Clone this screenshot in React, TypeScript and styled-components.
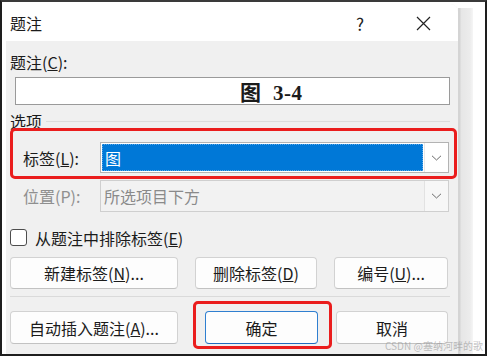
import React, { FC } from 'react'
import styled, { createGlobalStyle } from 'styled-components'

const GlobalStyle = createGlobalStyle`
  html, body {
    margin: 0;
    padding: 0;
    background: #ffffff;
  }
  * {
    box-sizing: border-box;
  }
`

const Page = styled.div`
  position: relative;
  width: 487px;
  height: 356px;
  border: 2px solid #1e1e1e;
  border-top-color: #3a3a3a;
  background: #ffffff;
  display: flex;
  overflow: hidden;
  font-family: "Noto Sans CJK SC", "Noto Sans", sans-serif;
  color: #1b1b1b;
`

const Dialog = styled.div`
  width: 452px;
  margin-top: 2px;
  margin-left: 4px;
  display: flex;
  flex-direction: column;
  border-top-right-radius: 8px;
  overflow: hidden;
  background: #f0f0f0;
`

const ShadowEdge = styled.div`
  width: 15px;
  margin-top: 6px;
  background: linear-gradient(to right, #d4d4d4 0px, #d4d4d4 2px, #e6e6e6 3px, #ececec 12px, #f6f6f6 15px);
`

const TitleBar = styled.div`
  height: 37px;
  flex: none;
  background: #ffffff;
  display: flex;
  align-items: center;
  padding: 1px 0 0 4px;
  font-size: 16px;
`

const Title = styled.span`
  flex: 1;
`

const TitleIcon = styled.span<{ $w: number }>`
  width: ${(p) => p.$w}px;
  display: flex;
  justify-content: center;
  align-items: center;
  font-size: 17px;
  color: #222;
`

const Body = styled.div`
  flex: 1;
  padding: 11px 0 0 4px;
  display: flex;
  flex-direction: column;
  font-size: 16px;
`

const Label = styled.div<{ $disabled?: boolean }>`
  line-height: 20px;
  height: 20px;
  white-space: nowrap;
  color: ${(p) => (p.$disabled ? '#8f8f8f' : '#1b1b1b')};
`

const CaptionInput = styled.div`
  margin: 5px 0 0 5px;
  width: 435px;
  height: 28px;
  background: #ffffff;
  border: 1px solid #9a9a9a;
  display: flex;
  align-items: center;
  padding-left: 224px;
  font-family: "Liberation Serif", "Noto Sans CJK SC", serif;
  font-weight: 700;
  font-size: 21px;
  letter-spacing: 0.5px;
`

const GroupHeader = styled.div`
  margin-top: 6px;
  display: flex;
  align-items: center;
  gap: 4px;
  width: 440px;
`

const GroupLine = styled.div`
  flex: 1;
  height: 1px;
  background: #dcdcdc;
`

const Highlight = styled.div`
  border: 3px solid #ea1d1d;
  border-radius: 5px;
`

const LabelHighlight = styled(Highlight)`
  margin-top: -3px;
  width: 447px;
  padding: 11px 0 3px 10px;
`

const FieldRow = styled.div<{ $indent?: number; $mt?: number }>`
  display: flex;
  align-items: center;
  padding-left: ${(p) => p.$indent ?? 0}px;
  margin-top: ${(p) => p.$mt ?? 0}px;
`

const FieldLabel = styled(Label)`
  width: 77px;
`

const Combo = styled.div<{ $disabled?: boolean; $h: number }>`
  width: 349px;
  height: ${(p) => p.$h}px;
  display: flex;
  border: 1px solid ${(p) => (p.$disabled ? '#cfcfcf' : '#b3b3b3')};
  background: ${(p) => (p.$disabled ? '#f2f2f2' : '#ffffff')};
`

const ComboField = styled.div`
  flex: 1;
  padding: 1px;
  display: flex;
`

const Selected = styled.div`
  flex: 1;
  background: #0078d7;
  color: #ffffff;
  display: flex;
  align-items: center;
  padding-left: 3px;
  outline: 1px dotted #5aa6e6;
  outline-offset: -1px;
`

const ComboText = styled.div`
  flex: 1;
  display: flex;
  align-items: center;
  padding-left: 3px;
  color: #8a8a8a;
`

const DropButton = styled.div<{ $disabled?: boolean }>`
  width: 24px;
  display: flex;
  align-items: center;
  justify-content: center;
  background: ${(p) => (p.$disabled ? '#f7f7f7' : '#ffffff')};
  border-left: 1px solid ${(p) => (p.$disabled ? '#e2e2e2' : '#e8e8e8')};
`

const CheckRow = styled.div`
  margin-top: 17px;
  display: flex;
  align-items: center;
  gap: 8px;
  height: 17px;
`

const CheckBox = styled.div`
  width: 17px;
  height: 17px;
  border: 1px solid #4d4d4d;
  border-radius: 3px;
  background: #ffffff;
`

const ButtonRow = styled.div<{ $mt: number }>`
  margin-top: ${(p) => p.$mt}px;
  display: flex;
  align-items: flex-start;
`

const Button = styled.div<{ $w: number; $h?: number; $ml?: number; $mt?: number; $default?: boolean }>`
  width: ${(p) => p.$w}px;
  height: ${(p) => p.$h ?? 32}px;
  margin-left: ${(p) => p.$ml ?? 0}px;
  margin-top: ${(p) => p.$mt ?? 0}px;
  flex: none;
  display: flex;
  align-items: center;
  justify-content: center;
  background: #fdfdfd;
  border: 1px solid ${(p) => (p.$default ? '#2f7fd0' : '#d2d2d2')};
  border-bottom-color: ${(p) => (p.$default ? '#1f6cc0' : '#c2c2c2')};
  border-radius: 4px;
  white-space: nowrap;
  font-size: 16px;
`

const Separator = styled.div`
  margin-top: 7px;
  width: 440px;
  height: 1px;
  background: #dadada;
`

const OkHighlight = styled(Highlight)`
  margin-left: 15px;
  width: 139px;
  padding: 7px 0 2px 9px;
`

const Watermark = styled.div`
  position: absolute;
  left: 383px;
  top: 336px;
  font-size: 10px;
  color: rgba(150, 150, 150, 0.6);
  white-space: nowrap;
`

const Chevron: FC = () => (
  <svg width="11" height="6" viewBox="0 0 11 6">
    <path d="M1 0.8 L5.5 5 L10 0.8" fill="none" stroke="#6a6a6a" strokeWidth="1" />
  </svg>
)

const CloseIcon: FC = () => (
  <svg width="15" height="15" viewBox="0 0 15 15">
    <path d="M1 1 L14 14 M14 1 L1 14" stroke="#222" strokeWidth="1.2" />
  </svg>
)

export default function App() {
  return (
    <>
      <GlobalStyle />
      <Page>
        <Dialog>
          <TitleBar>
            <Title>题注</Title>
            <TitleIcon $w={28}>?</TitleIcon>
            <TitleIcon $w={35} />
            <TitleIcon $w={28}>
              <CloseIcon />
            </TitleIcon>
            <TitleIcon $w={21} />
          </TitleBar>
          <Body>
            <Label>
              题注(<u>C</u>):
            </Label>
            <CaptionInput>图&nbsp;&nbsp;3-4</CaptionInput>
            <GroupHeader>
              <Label>选项</Label>
              <GroupLine />
            </GroupHeader>
            <LabelHighlight>
              <FieldRow>
                <FieldLabel>
                  标签(<u>L</u>):
                </FieldLabel>
                <Combo $h={31}>
                  <ComboField>
                    <Selected>图</Selected>
                  </ComboField>
                  <DropButton>
                    <Chevron />
                  </DropButton>
                </Combo>
              </FieldRow>
            </LabelHighlight>
            <FieldRow $indent={13} $mt={1}>
              <FieldLabel $disabled>位置(P):</FieldLabel>
              <Combo $h={32} $disabled>
                <ComboText>所选项目下方</ComboText>
                <DropButton $disabled>
                  <Chevron />
                </DropButton>
              </Combo>
            </FieldRow>
            <CheckRow>
              <CheckBox />
              <Label>
                从题注中排除标签(<u>E</u>)
              </Label>
            </CheckRow>
            <ButtonRow $mt={11}>
              <Button $w={168}>
                新建标签(<u>N</u>)...
              </Button>
              <Button $w={122} $ml={17}>
                删除标签(<u>D</u>)
              </Button>
              <Button $w={114} $ml={17}>
                编号(<u>U</u>)...
              </Button>
            </ButtonRow>
            <Separator />
            <ButtonRow $mt={4}>
              <Button $w={168} $h={33} $mt={10}>
                自动插入题注(<u>A</u>)...
              </Button>
              <OkHighlight>
                <Button $w={113} $h={33} $default>
                  确定
                </Button>
              </OkHighlight>
              <Button $w={112} $h={33} $ml={4} $mt={10}>
                取消
              </Button>
            </ButtonRow>
          </Body>
        </Dialog>
        <ShadowEdge />
        <Watermark>CSDN @塞纳河畔的歌</Watermark>
      </Page>
    </>
  )
}
